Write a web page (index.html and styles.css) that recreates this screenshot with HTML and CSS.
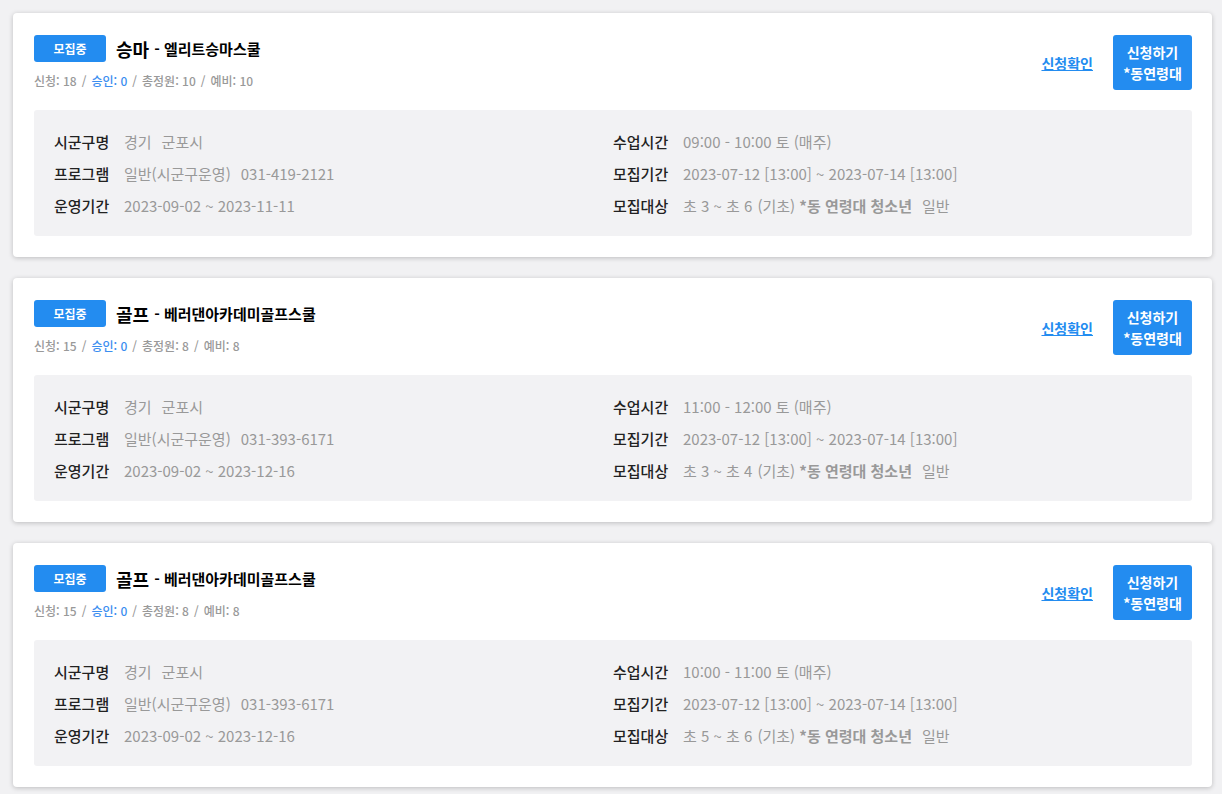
FILE: index.html
```html
<!DOCTYPE html>
<html lang="ko">
<head>
  <meta charset="UTF-8" />
  <meta name="viewport" content="width=device-width, initial-scale=1.0"/>
  <title>프로그램 목록</title>
  <link rel="stylesheet" href="styles.css">
</head>
<body>
  <div class="list">
    <div class="card">
      <div class="card-head">
        <div class="head-left">
          <div class="title-row">
            <span class="badge">모집중</span>
            <span class="title">승마</span>
            <span class="subtitle">- 엘리트승마스쿨</span>
          </div>
          <div class="stats">
            신청: 18<span class="sep">/</span><span class="ok">승인: 0</span><span class="sep">/</span>총정원: 10<span class="sep">/</span>예비: 10
          </div>
        </div>
        <div class="head-right">
          <a href="#" class="check-link">신청확인</a>
          <button class="apply-btn">신청하기<br>*동연령대</button>
        </div>
      </div>
      <div class="info">
        <div class="row"><span class="label">시군구명</span><span class="value">경기<span class="gap"></span>군포시</span></div>
        <div class="row"><span class="label">수업시간</span><span class="value">09:00 - 10:00 토 (매주)</span></div>
        <div class="row"><span class="label">프로그램</span><span class="value">일반(시군구운영)<span class="gap"></span>031-419-2121</span></div>
        <div class="row"><span class="label">모집기간</span><span class="value">2023-07-12 [13:00] ~ 2023-07-14 [13:00]</span></div>
        <div class="row"><span class="label">운영기간</span><span class="value">2023-09-02 ~ 2023-11-11</span></div>
        <div class="row"><span class="label">모집대상</span><span class="value">초 3 ~ 초 6<span class="gap sm"></span>(기초) <b>*동 연령대 청소년</b><span class="gap"></span>일반</span></div>
      </div>
    </div>

    <div class="card">
      <div class="card-head">
        <div class="head-left">
          <div class="title-row">
            <span class="badge">모집중</span>
            <span class="title">골프</span>
            <span class="subtitle">- 베러댄아카데미골프스쿨</span>
          </div>
          <div class="stats">
            신청: 15<span class="sep">/</span><span class="ok">승인: 0</span><span class="sep">/</span>총정원: 8<span class="sep">/</span>예비: 8
          </div>
        </div>
        <div class="head-right">
          <a href="#" class="check-link">신청확인</a>
          <button class="apply-btn">신청하기<br>*동연령대</button>
        </div>
      </div>
      <div class="info">
        <div class="row"><span class="label">시군구명</span><span class="value">경기<span class="gap"></span>군포시</span></div>
        <div class="row"><span class="label">수업시간</span><span class="value">11:00 - 12:00 토 (매주)</span></div>
        <div class="row"><span class="label">프로그램</span><span class="value">일반(시군구운영)<span class="gap"></span>031-393-6171</span></div>
        <div class="row"><span class="label">모집기간</span><span class="value">2023-07-12 [13:00] ~ 2023-07-14 [13:00]</span></div>
        <div class="row"><span class="label">운영기간</span><span class="value">2023-09-02 ~ 2023-12-16</span></div>
        <div class="row"><span class="label">모집대상</span><span class="value">초 3 ~ 초 4<span class="gap sm"></span>(기초) <b>*동 연령대 청소년</b><span class="gap"></span>일반</span></div>
      </div>
    </div>

    <div class="card">
      <div class="card-head">
        <div class="head-left">
          <div class="title-row">
            <span class="badge">모집중</span>
            <span class="title">골프</span>
            <span class="subtitle">- 베러댄아카데미골프스쿨</span>
          </div>
          <div class="stats">
            신청: 15<span class="sep">/</span><span class="ok">승인: 0</span><span class="sep">/</span>총정원: 8<span class="sep">/</span>예비: 8
          </div>
        </div>
        <div class="head-right">
          <a href="#" class="check-link">신청확인</a>
          <button class="apply-btn">신청하기<br>*동연령대</button>
        </div>
      </div>
      <div class="info">
        <div class="row"><span class="label">시군구명</span><span class="value">경기<span class="gap"></span>군포시</span></div>
        <div class="row"><span class="label">수업시간</span><span class="value">10:00 - 11:00 토 (매주)</span></div>
        <div class="row"><span class="label">프로그램</span><span class="value">일반(시군구운영)<span class="gap"></span>031-393-6171</span></div>
        <div class="row"><span class="label">모집기간</span><span class="value">2023-07-12 [13:00] ~ 2023-07-14 [13:00]</span></div>
        <div class="row"><span class="label">운영기간</span><span class="value">2023-09-02 ~ 2023-12-16</span></div>
        <div class="row"><span class="label">모집대상</span><span class="value">초 5 ~ 초 6<span class="gap sm"></span>(기초) <b>*동 연령대 청소년</b><span class="gap"></span>일반</span></div>
      </div>
    </div>
  </div>
</body>
</html>
```

FILE: styles.css
```css
body {
  margin: 0;
  background-color: #f1f1f3;
  font-family: "Noto Sans CJK KR", "Noto Sans", sans-serif;
  color: #222;
}
.list {
  display: flex;
  flex-direction: column;
  gap: 21px;
  padding: 13px 10px 13px 13px;
}
.card {
  background-color: #fff;
  border-radius: 4px;
  box-shadow: 0 1px 5px rgba(0, 0, 0, 0.22);
  padding: 22px 20px 21px 21px;
}
.card-head {
  display: flex;
  justify-content: space-between;
  align-items: flex-start;
  margin-bottom: 20px;
}
.title-row {
  display: flex;
  align-items: center;
  height: 27px;
}
.badge {
  display: inline-flex;
  align-items: center;
  justify-content: center;
  width: 72px;
  height: 27px;
  border-radius: 3px;
  background-color: #238cf0;
  color: #fff;
  font-size: 12px;
  font-weight: 700;
  margin-right: 10px;
}
.title {
  font-size: 18px;
  font-weight: 700;
  color: #000;
  margin-right: 5px;
}
.subtitle {
  font-size: 15px;
  font-weight: 700;
  color: #000;
}
.stats {
  margin-top: 10px;
  line-height: 18px;
  font-size: 12px;
  font-weight: 500;
  color: #999;
}
.stats .sep {
  margin: 0 5px;
}
.stats .ok {
  color: #3b8ef0;
}
.head-right {
  display: flex;
  align-items: center;
  gap: 20px;
}
.check-link {
  font-size: 14px;
  font-weight: 700;
  color: #238cf0;
  text-decoration: underline;
}
.apply-btn {
  width: 79px;
  height: 55px;
  border: 0;
  border-radius: 3px;
  background-color: #238cf0;
  color: #fff;
  font-family: inherit;
  font-size: 14px;
  font-weight: 700;
  line-height: 21px;
  padding: 0;
  cursor: pointer;
}
.info {
  display: grid;
  grid-template-columns: 1fr 1fr;
  background-color: #f2f2f4;
  border-radius: 3px;
  padding: 15px 20px;
}
.row {
  display: flex;
  align-items: center;
  height: 32px;
  font-size: 15px;
}
.label {
  width: 70px;
  flex-shrink: 0;
  color: #222;
  font-weight: 500;
}
.value {
  color: #999;
}
.value b {
  font-weight: 700;
}
.gap {
  display: inline-block;
  width: 10px;
}
.gap.sm {
  width: 5px;
}
```
